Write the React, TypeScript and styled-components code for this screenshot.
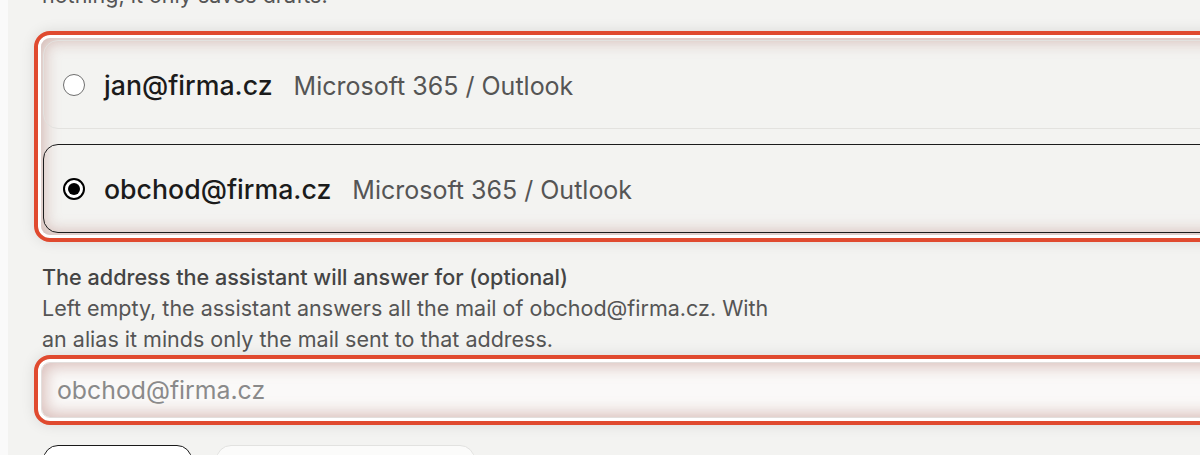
import React from "react";
import styled, { createGlobalStyle } from "styled-components";

const Global = createGlobalStyle`
  html, body {
    margin: 0;
    padding: 0;
    overflow: hidden;
    background: #fafafa;
  }
  body {
    font-family: Inter, "Noto Sans", sans-serif;
    -webkit-font-smoothing: antialiased;
  }
`;

const Page = styled.div`
  padding-left: 8px;
  height: 455px;
  overflow: hidden;
`;

const Panel = styled.div`
  background: #f3f3f1;
  width: 1400px;
  min-height: 520px;
  padding-left: 33px;
  display: flex;
  flex-direction: column;
  align-items: stretch;
  box-sizing: border-box;
  & > * {
    flex-shrink: 0;
  }
`;

const Intro = styled.p`
  margin: -19px 0 0;
  padding-left: 1px;
  font-size: 21.5px;
  line-height: 28px;
  color: #555;
`;

const Highlight = styled.div`
  border-radius: 9px;
  outline: 4px solid #e04a2f;
  outline-offset: 3px;
  box-shadow: 0 0 0 3px #ffffff, 0 0 14px 7px rgba(0, 0, 0, 0.1),
    inset 0 0 16px 3px rgba(165, 95, 85, 0.4);
`;

const OptionGroup = styled(Highlight)`
  margin-top: 29px;
  padding: 2px;
  display: flex;
  flex-direction: column;
  gap: 15px;
`;

const Option = styled.label<{ $selected?: boolean }>`
  height: 89px;
  box-sizing: border-box;
  border-radius: 15px;
  border: 1.5px solid ${(p) => (p.$selected ? "#1c1c1c" : "#e3e2df")};
  display: flex;
  align-items: center;
  padding-left: 19px;
  gap: 19px;
  cursor: pointer;
`;

const Radio = styled.span<{ $checked?: boolean }>`
  width: 22px;
  height: 22px;
  box-sizing: border-box;
  border-radius: 50%;
  background: #fff;
  border: ${(p) => (p.$checked ? "2px solid #000" : "1.5px solid #6f6f6f")};
  display: flex;
  align-items: center;
  justify-content: center;
  flex-shrink: 0;
  &::after {
    content: "";
    width: 12px;
    height: 12px;
    border-radius: 50%;
    background: #000;
    display: ${(p) => (p.$checked ? "block" : "none")};
  }
`;

const OptionText = styled.span`
  display: flex;
  align-items: baseline;
  gap: 21px;
`;

const Address = styled.span`
  font-size: 26.7px;
  font-weight: 500;
  color: #1b1b1b;
`;

const Provider = styled.span`
  font-size: 25px;
  color: #555;
`;

const FieldLabel = styled.div`
  margin-top: 27px;
  padding-left: 1px;
  font-size: 21.6px;
  font-weight: 500;
  line-height: 31px;
  color: #444;
`;

const Help = styled.div`
  padding-left: 1px;
  font-size: 21.5px;
  line-height: 31px;
  color: #555;
  max-width: 742px;
`;

const InputWrap = styled(Highlight)`
  margin-top: 7px;
  height: 56px;
  background: #faf9f8;
  border: 1px solid #e2dedc;
  box-sizing: border-box;
  display: flex;
`;

const Input = styled.input`
  flex: 1;
  border: none;
  background: transparent;
  padding: 0 15px;
  font-family: Inter, "Noto Sans", sans-serif;
  font-size: 24.8px;
  color: #222;
  outline: none;
  &::placeholder {
    color: #8a8a8a;
  }
`;

const Actions = styled.div`
  margin: 27px 0 0 2px;
  display: flex;
  gap: 24px;
`;

const Button = styled.button<{ $primary?: boolean }>`
  height: 60px;
  width: ${(p) => (p.$primary ? "149px" : "259px")};
  box-sizing: border-box;
  border-radius: 15px;
  border: ${(p) => (p.$primary ? "1.5px solid #1a1a1a" : "1px solid #e2e2e0")};
  background: ${(p) => (p.$primary ? "#fff" : "#fbfbfa")};
  font-family: Inter, sans-serif;
  font-size: 21px;
  color: #1b1b1b;
  padding-top: 24px;
`;

export default function App() {
  return (
    <Page>
      <Global />
      <Panel>
        <Intro>nothing, it only saves drafts.</Intro>
        <OptionGroup>
          <Option>
            <Radio />
            <OptionText>
              <Address>jan@firma.cz</Address>
              <Provider>Microsoft 365 / Outlook</Provider>
            </OptionText>
          </Option>
          <Option $selected>
            <Radio $checked />
            <OptionText>
              <Address>obchod@firma.cz</Address>
              <Provider>Microsoft 365 / Outlook</Provider>
            </OptionText>
          </Option>
        </OptionGroup>
        <FieldLabel>The address the assistant will answer for (optional)</FieldLabel>
        <Help>
          Left empty, the assistant answers all the mail of obchod@firma.cz.
          With an alias it minds only the mail sent to that address.
        </Help>
        <InputWrap>
          <Input placeholder="obchod@firma.cz" />
        </InputWrap>
        <Actions>
          <Button $primary>Save</Button>
          <Button>Send a test draft</Button>
        </Actions>
      </Panel>
    </Page>
  );
}
